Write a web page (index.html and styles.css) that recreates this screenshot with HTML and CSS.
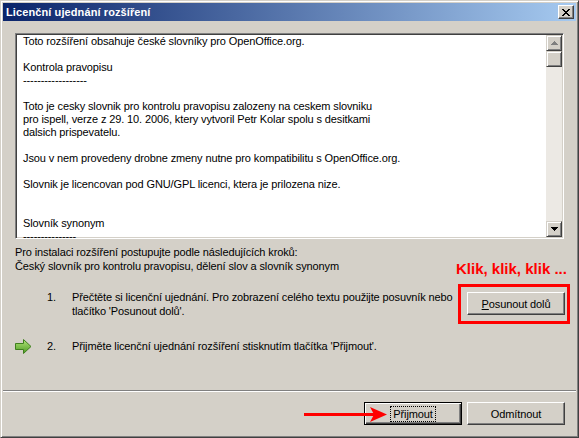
FILE: index.html
```html
<!DOCTYPE html>
<html>
<head>
    <title>Licenční ujednání rozšíření</title>
    <link rel="stylesheet" href="styles.css">
</head>
<body>
    <div class="window">
        <div class="titlebar">
            <span class="title">Licenční ujednání rozšíření</span>
            <button class="close">
                <svg width="8" height="7" viewBox="0 0 8 7">
                    <path d="M0 0h2v1h1v1h2v-1h1v-1h2v1h-1v1h-1v1h-1v1h1v1h1v1h1v1h-2v-1h-1v-1h-2v1h-1v1h-2v-1h1v-1h1v-1h1v-1h-1v-1h-1v-1h-1z" fill="#000"/>
                </svg>
            </button>
        </div>

        <div class="content">
            <div class="license">
                <div class="license-text">Toto rozšíření obsahuje české slovníky pro OpenOffice.org.

Kontrola pravopisu
------------------

Toto je cesky slovnik pro kontrolu pravopisu zalozeny na ceskem slovniku
pro ispell, verze z 29. 10. 2006, ktery vytvoril Petr Kolar spolu s desitkami
dalsich prispevatelu.

Jsou v nem provedeny drobne zmeny nutne pro kompatibilitu s OpenOffice.org.

Slovnik je licencovan pod GNU/GPL licenci, ktera je prilozena nize.


Slovník synonym
---------------</div>
                <div class="scrollbar">
                    <div class="sb-btn">
                        <svg width="7" height="4" viewBox="0 0 7 4"><path d="M3 0h1v1h1v1h1v1h1v1h-7v-1h1v-1h1v-1h1z" fill="#808080"/></svg>
                    </div>
                    <div class="sb-thumb"></div>
                    <div class="sb-track"></div>
                    <div class="sb-btn">
                        <svg width="7" height="4" viewBox="0 0 7 4"><path d="M0 0h7v1h-1v1h-1v1h-1v1h-1v-1h-1v-1h-1v-1h-1z" fill="#000"/></svg>
                    </div>
                </div>
            </div>

            <p class="intro">Pro instalaci rozšíření postupujte podle následujících kroků:<br>Český slovník pro kontrolu pravopisu, dělení slov a slovník synonym</p>

            <div class="step step-first">
                <span class="step-icon"></span>
                <span class="step-num">1.</span>
                <span class="step-text">Přečtěte si licenční ujednání. Pro zobrazení celého textu použijte posuvník nebo<br>tlačítko 'Posunout dolů'.</span>
                <button class="btn btn-scroll"><u>P</u>osunout dolů</button>
            </div>

            <div class="step">
                <span class="step-icon">
                    <svg width="17" height="15" viewBox="0 0 17 15">
                        <defs>
                            <linearGradient id="g" x1="0" y1="0" x2="0" y2="1">
                                <stop offset="0" stop-color="#b4e67a"/>
                                <stop offset="1" stop-color="#4c9a22"/>
                            </linearGradient>
                        </defs>
                        <path d="M0.5 4.5h8v-4l7.5 7-7.5 7v-4h-8z" fill="url(#g)" stroke="#3f7f1e"/>
                    </svg>
                </span>
                <span class="step-num">2.</span>
                <span class="step-text">Přijměte licenční ujednání rozšíření stisknutím tlačítka 'Přijmout'.</span>
            </div>
        </div>

        <div class="footer">
            <button class="btn btn-default"><span class="focus">Přijmout</span></button>
            <button class="btn">Odmítnout</button>
        </div>

        <div class="hint">Klik, klik, klik ...</div>
        <div class="hint-box"></div>
        <svg class="hint-arrow" width="84" height="17" viewBox="0 0 84 17">
            <rect x="0" y="7" width="70" height="3" fill="#f00"/>
            <path d="M66 1L83 8.5 66 16 70 8.5z" fill="#f00"/>
        </svg>
    </div>
</body>
</html>
```

FILE: styles.css
```css
body {
    margin: 0;
    font-family: "Liberation Sans", Arial, sans-serif;
    font-size: 11px;
    color: #000;
    background-color: #d4d0c8;
}

.window {
    position: relative;
    width: 579px;
    height: 438px;
    box-sizing: border-box;
    display: flex;
    flex-direction: column;
    padding: 2px;
    border: 1px solid;
    border-color: #d4d0c8 #404040 #404040 #d4d0c8;
    box-shadow: inset 1px 1px #fff, inset -1px -1px #808080;
    background-color: #d4d0c8;
}

.titlebar {
    height: 18px;
    display: flex;
    align-items: center;
    justify-content: space-between;
    padding: 0 2px 0 3px;
    background: linear-gradient(to right, #0a246a, #a6caf0);
}

.title {
    color: #fff;
    font-weight: bold;
    font-size: 11px;
    letter-spacing: 0.1px;
}

.close {
    width: 16px;
    height: 14px;
    padding: 0;
    display: flex;
    align-items: center;
    justify-content: center;
    background-color: #d4d0c8;
    border: 1px solid;
    border-color: #fff #404040 #404040 #fff;
    box-shadow: inset -1px -1px #808080;
}

.content {
    padding: 12px 11px 0 12px;
    letter-spacing: -0.12px;
}

.license {
    height: 206px;
    margin-right: 1px;
    box-sizing: border-box;
    display: flex;
    padding: 1px 1px 0 1px;
    border: 1px solid;
    border-color: #808080 #fff #fff #808080;
    box-shadow: inset 1px 1px #404040, inset -1px -1px #d4d0c8;
    background-color: #fff;
}

.license-text {
    flex: 1;
    overflow: hidden;
    padding: 0 6px;
    line-height: 13px;
    white-space: pre;
}

.scrollbar {
    width: 16px;
    margin-bottom: 1px;
    display: flex;
    flex-direction: column;
    background-color: #ece9e4;
}

.sb-btn,
.sb-thumb {
    height: 16px;
    box-sizing: border-box;
    display: flex;
    align-items: center;
    justify-content: center;
    background-color: #d4d0c8;
    border: 1px solid;
    border-color: #d4d0c8 #404040 #404040 #d4d0c8;
    box-shadow: inset 1px 1px #fff, inset -1px -1px #808080;
}

.sb-track {
    flex: 1;
}

.intro {
    margin: 6px 0 0;
    line-height: 14px;
}

.step {
    display: grid;
    grid-template-columns: 32px 25px 1fr auto;
    align-items: start;
    margin-top: 21px;
    line-height: 14px;
}

.step-first {
    margin-top: 17px;
}

.step-icon {
    height: 14px;
}

.btn {
    width: 98px;
    height: 23px;
    padding: 0;
    font-family: inherit;
    font-size: 11px;
    letter-spacing: -0.12px;
    color: #000;
    background-color: #d4d0c8;
    border: 1px solid;
    border-color: #fff #404040 #404040 #fff;
    box-shadow: inset -1px -1px #808080;
}

.btn-scroll {
    margin-top: 2px;
}

.btn-default {
    border-color: #000;
    box-shadow: inset 1px 1px #fff, inset -1px -1px #404040, inset -2px -2px #808080;
}

.focus {
    padding: 1px 2px;
    border: 1px dotted #000;
}

.footer {
    margin-top: auto;
    display: flex;
    justify-content: flex-end;
    gap: 5px;
    padding: 11px 11px 10px;
    border-top: 1px solid #808080;
    box-shadow: inset 0 1px #fff;
}

.hint {
    position: absolute;
    left: 455px;
    top: 260px;
    color: #f00;
    font-size: 15px;
    font-weight: bold;
    line-height: 15px;
}

.hint-box {
    position: absolute;
    left: 457px;
    top: 283px;
    width: 106px;
    height: 34px;
    border: 3px solid #f00;
}

.hint-arrow {
    position: absolute;
    left: 303px;
    top: 405px;
}
```
